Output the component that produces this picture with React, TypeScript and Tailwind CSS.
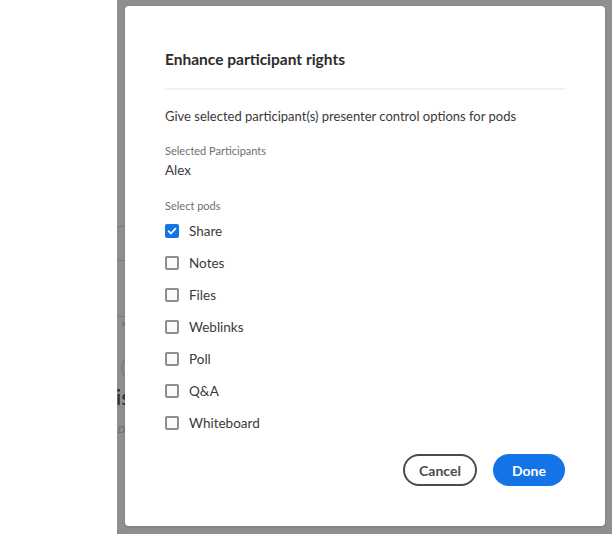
import { useState } from 'react';

const PODS = ['Share', 'Notes', 'Files', 'Weblinks', 'Poll', 'Q&A', 'Whiteboard'];

function Checkbox({ checked }: { checked: boolean }) {
  if (checked) {
    return (
      <span className="flex h-[14px] w-[14px] items-center justify-center rounded-[2px] bg-[#1473e6]">
        <svg viewBox="0 0 10 10" className="h-[10px] w-[10px]">
          <path d="M1.6 5.2 L4 7.5 L8.4 2.6" fill="none" stroke="#fff" strokeWidth="1.8" strokeLinecap="round" strokeLinejoin="round" />
        </svg>
      </span>
    );
  }
  return <span className="h-[14px] w-[14px] rounded-[2px] border-2 border-[#8e8e8e] bg-[#fafafa]" />;
}

export default function App() {
  const [selected, setSelected] = useState<Record<string, boolean>>({ Share: true });

  return (
    <div className="flex h-[534px] w-[612px] overflow-hidden bg-white font-['Lato',sans-serif] text-[#2c2c2c]">
      {/* side area */}
      <div className="w-[117px] shrink-0 bg-white" />

      {/* dimmed page behind the modal */}
      <div className="relative flex flex-1 bg-[#8f8f8f] pb-[8px] pl-[8px] pr-[7px] pt-[6px]">
        {/* bits of the page that peek out on the left edge */}
        <div className="absolute left-0 top-[226px] h-px w-[10px] -rotate-6 bg-[#7c7c7c]" />
        <div className="absolute left-0 top-[260px] h-px w-[10px] bg-[#7c7c7c]" />
        <div className="absolute left-0 top-[316px] h-px w-[10px] bg-[#7c7c7c]" />
        <div className="absolute left-[5px] top-[322px] h-[4px] w-[3px] rounded-full bg-[#7c7c7c]" />
        <div className="absolute left-[3px] top-[356px] text-[20px] leading-none text-[#7c7c7c]">(</div>
        <div className="absolute left-[-1px] top-[386px] text-[22px] leading-none text-[#2a2a2a]">is</div>
        <div className="absolute left-[1px] top-[424px] text-[10px] italic leading-none text-[#6a6a6a]">D</div>

        {/* modal */}
        <div className="relative flex flex-1 flex-col rounded-[4px] bg-white px-10 pt-[41px] shadow-[0_1px_3px_rgba(0,0,0,0.15)]">
          <h2 className="text-[15.5px] font-bold leading-[24px] text-[#2c2c2c]">Enhance participant rights</h2>
          <div className="mt-[17px] h-[2px] bg-[#f2f2f2]" />

          <p className="mt-[16px] text-[13px] leading-[20px] text-[#3a3a3a]">
            Give selected participant(s) presenter control options for pods
          </p>

          <div className="mt-[18px] text-[11px] leading-[14px] text-[#6e6e6e]">Selected Participants</div>
          <div className="mt-[2px] text-[13.5px] leading-[20px] text-[#3a3a3a]">Alex</div>

          <div className="mt-[19px] text-[11px] leading-[14px] text-[#6e6e6e]">Select pods</div>
          <ul className="mt-[2px] flex flex-col">
            {PODS.map((pod) => (
              <li
                key={pod}
                className="flex h-[32px] cursor-pointer items-center gap-[10px] text-[13.5px] text-[#3a3a3a]"
                onClick={() => setSelected((s) => ({ ...s, [pod]: !s[pod] }))}
              >
                <Checkbox checked={!!selected[pod]} />
                <span>{pod}</span>
              </li>
            ))}
          </ul>

          <div className="mt-[15px] flex justify-end gap-4">
            <button className="h-[32px] w-[74px] rounded-full border-2 border-[#4b4b4b] text-[14px] font-bold text-[#4b4b4b]">
              Cancel
            </button>
            <button className="h-[32px] w-[72px] rounded-full bg-[#1473e6] text-[14px] font-bold text-white">
              Done
            </button>
          </div>
        </div>
      </div>
    </div>
  );
}
